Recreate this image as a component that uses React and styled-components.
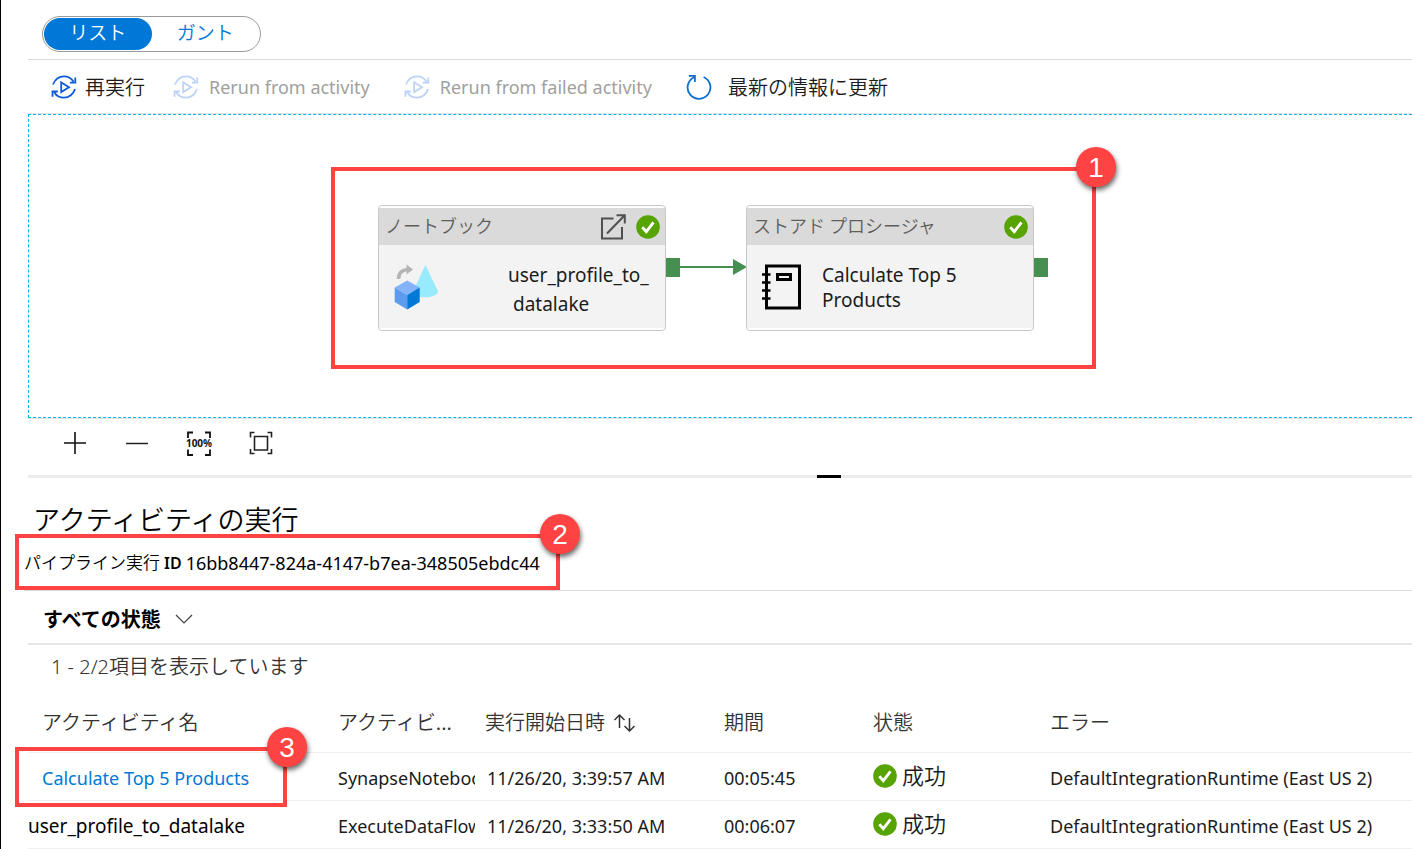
import React from "react";
import styled, { createGlobalStyle } from "styled-components";

const GlobalStyle = createGlobalStyle`
  * { box-sizing: border-box; }
  body {
    margin: 0;
    background: #fff;
    color: #1b1b1b;
    font-family: "Noto Sans", "Noto Sans CJK JP", sans-serif;
    font-size: 18px;
    line-height: 24px;
    overflow: hidden;
  }
  button, select { font: inherit; color: inherit; background: none; border: 0; padding: 0; margin: 0; }
  svg { display: block; flex: none; }
`;

const jp = '"Noto Sans CJK JP", sans-serif';

const Page = styled.main`
  min-height: 100vh;
  padding-left: 27px;
  border-left: 1px solid #000;
`;

const ViewBar = styled.header`
  padding: 16px 14px 7px;
  border-bottom: 1px solid #d9d9d9;
`;

const Toggle = styled.div`
  display: inline-flex;
  vertical-align: top;
  width: 219px;
  height: 36px;
  padding: 1px;
  border: 1px solid #9a9a9a;
  border-radius: 18px;
`;

const ToggleButton = styled.button`
  width: 108px;
  height: 32px;
  padding-bottom: 4px;
  border-radius: 16px;
  font: 350 19px/28px ${jp};
  background: ${(p) => (p.$active ? "#0078d7" : "transparent")};
  color: ${(p) => (p.$active ? "#fff" : "#0078d7")};
`;

const Toolbar = styled.div`
  display: flex;
  align-items: center;
  gap: 28px;
  height: 53px;
  padding-left: 23px;
`;

const ToolButton = styled.button`
  display: flex;
  align-items: center;
  gap: ${(p) => p.$gap || 8}px;
  height: 32px;
  margin-right: ${(p) => p.$after || 0}px;
  font: ${(p) => (p.$jp ? `350 20px/28px ${jp}` : "inherit")};
  color: ${(p) => (p.disabled ? "#a19f9d" : "#1b1b1b")};
  white-space: nowrap;
`;

const CanvasFrame = styled.section`
  border-top: 1px solid #e3e3e3;
  border-bottom: 1px solid #e3e3e3;
`;

const Canvas = styled.div`
  position: relative;
  height: 304px;
  border: 1px dashed #00b4ef;
  border-right: 0;
`;

const Node = styled.article`
  position: absolute;
  left: ${(p) => p.$x}px;
  top: 90px;
  width: 288px;
  height: 126px;
  padding: 2px 0;
  border: 1px solid #c8c8c8;
  border-radius: 4px;
  background: #fff;
`;

const NodeHead = styled.header`
  display: flex;
  align-items: center;
  gap: 10px;
  height: 37px;
  padding: 0 5px 0 6px;
  background: #dadada;
  color: #605e5c;
  font: 350 18px/28px ${jp};
`;

const NodeTitle = styled.span`
  flex: 1;
  padding-bottom: 3px;
  white-space: nowrap;
`;

const NodeBody = styled.div`
  display: flex;
  align-items: center;
  height: 83px;
  padding-left: 15px;
  background: #f3f3f3;
`;

const NodeLabel = styled.div`
  margin-left: ${(p) => p.$gap}px;
  width: 150px;
  padding-top: ${(p) => p.$drop || 2}px;
  font-size: 19px;
  line-height: ${(p) => p.$line || 25}px;
`;

const LabelLine = styled.div`
  padding-left: ${(p) => p.$indent || 0}px;
`;

const Port = styled.div`
  position: absolute;
  left: ${(p) => p.$x}px;
  top: 143px;
  width: 14px;
  height: 19px;
  background: #458f51;
`;

const Arrow = styled.svg`
  position: absolute;
  left: 651px;
  top: 143px;
`;

const Callout = styled.div`
  position: absolute;
  z-index: 2;
  left: ${(p) => p.$x}px;
  top: ${(p) => p.$y}px;
  width: ${(p) => p.$w}px;
  height: ${(p) => p.$h}px;
  border: 4px solid #ff4343;
  pointer-events: none;
`;

const Badge = styled.span`
  position: absolute;
  top: -24px;
  right: -24px;
  width: 40px;
  height: 40px;
  border-radius: 50%;
  background: #ff4343;
  box-shadow: 1px 3px 5px rgba(0, 0, 0, 0.6);
  color: #fff;
  font: 28px/41px "Liberation Sans", sans-serif;
  text-align: center;
`;

const ZoomBar = styled.div`
  display: flex;
  height: 56px;
  padding: 8px 0 0 16px;
`;

const ZoomButton = styled.button`
  display: flex;
  align-items: center;
  justify-content: center;
  width: 62px;
  height: 32px;
`;

const Splitter = styled.div`
  height: 3px;
  background: #ececec;
`;

const SplitterHandle = styled.div`
  width: 24px;
  height: 3px;
  margin-left: 57%;
  background: #000;
`;

const Heading = styled.h2`
  margin: 0;
  padding: 26px 0 1px 5px;
  font: 350 27px/30px ${jp};
  color: #000;
`;

const RunId = styled.div`
  position: relative;
  display: flex;
  align-items: center;
  gap: 4px;
  height: 56px;
  margin-left: -4px;
  border-bottom: 1px solid #dcdcdc;
  color: #000;
`;

const RunIdLabel = styled.span`
  padding-bottom: 1px;
  font: 350 17px/24px ${jp};
`;

const RunIdMark = styled.span`
  font-weight: 600;
  font-size: 16px;
`;

const Filter = styled.div`
  display: flex;
  align-items: center;
  height: 54px;
  padding: 4px 0 0 15px;
  border-bottom: 2px solid #e6e6e6;
`;

const StateSelect = styled.select`
  appearance: none;
  width: 132px;
  font: 700 20px/32px ${jp};
  color: #000;
`;

const Count = styled.p`
  margin: 0;
  padding: 6px 0 10px 23px;
  font-size: 20px;
  font-weight: 350;
  line-height: 31px;
  color: #333;
`;

const Table = styled.table`
  width: 100%;
  table-layout: fixed;
  border-collapse: separate;
  border-spacing: 0;
`;

const HeadCell = styled.th`
  height: 61px;
  padding: 0 0 0 ${(p) => p.$pad || 0}px;
  border-bottom: 1px solid #f0f0f0;
  font: 350 20px/30px ${jp};
  color: #333;
  text-align: left;
  white-space: nowrap;
`;

const HeadLabel = styled.span`
  display: flex;
  align-items: center;
  gap: 8px;
`;

const Cell = styled.td`
  position: ${(p) => (p.$anchor ? "relative" : "static")};
  height: 48px;
  padding: ${(p) => (p.$status ? 0 : 2)}px 0 0 ${(p) => p.$pad || 0}px;
  border-bottom: 1px solid #f0f0f0;
  overflow: ${(p) => (p.$clip ? "hidden" : "visible")};
  white-space: nowrap;
`;

const ActivityLink = styled.a`
  color: #0078d4;
  text-decoration: none;
`;

const ActivityName = styled.span`
  color: #000;
  font-size: 19px;
`;

const Status = styled.span`
  display: flex;
  align-items: center;
  gap: 5px;
  height: 44px;
  padding-bottom: 2px;
`;

const StatusText = styled.span`
  padding-bottom: 3px;
  font: 350 22px/30px ${jp};
`;

const RerunIcon = ({ faded }) => (
  <svg width="26" height="24" viewBox="0 0 26 24" fill="none" stroke={faded ? "#bcd3f7" : "#0b5cdb"} strokeWidth="1.800">
    <path d="M2 9.500C4 4.300 8 1.300 13 1.300c4 0 7.500 2 9.500 5.200M24.300 2.500v5.200h-5.400" />
    <path d="M24 14c-1.500 5-6 8.700-11 8.700-4 0-7.500-2-9.600-5.300M1.500 21.800v-5.300h5.400" />
    <path d="M10.200 7.300v9.800l7.800-4.900z" />
  </svg>
);

const RefreshIcon = () => (
  <svg width="26" height="26" viewBox="0 0 26 26" fill="none" stroke="#0f6fce" strokeWidth="1.800">
    <path d="M8 3.200A11.400 11.400 0 1 0 17.600 3M2.800 1.800h6.100v6.300" />
  </svg>
);

const CheckIcon = () => (
  <svg width="24" height="24" viewBox="0 0 24 24" fill="none">
    <circle cx="12" cy="12" r="11.800" fill="#57a300" />
    <path d="M6.300 12.300l4 4.400 7.200-9.400" stroke="#fff" strokeWidth="2.800" />
  </svg>
);

const OpenIcon = () => (
  <svg width="26" height="26" viewBox="0 0 26 26" fill="none" stroke="#505050" strokeWidth="2">
    <path d="M13.500 4.500H2v20h20V13M7 19.500L24.500 1.500M16.500 1.200h8.300v8.300" />
  </svg>
);

const DataFlowIcon = () => (
  <svg width="45" height="46" viewBox="0 0 45 46">
    <path d="M31.500 1L18.800 28c0 3 5.600 5.300 12.600 5.300S44 30.500 44 27.500z" fill="#98eafd" />
    <path d="M4.500 15C4.500 8 9 5.500 14.500 5.500" fill="none" stroke="#b5b5b5" strokeWidth="3.600" />
    <path d="M12.500.5l6.500 5-6.500 5z" fill="#b5b5b5" />
    <path d="M13.200 16.500L25.700 23.500 13.200 31 .7 23.500z" fill="#83b3f8" />
    <path d="M.7 23.500l12.500 7.500v14.500L.7 38z" fill="#5c9bee" />
    <path d="M25.700 23.500L13.200 31v14.500L25.700 38z" fill="#0078d7" />
  </svg>
);

const NotebookIcon = () => (
  <svg width="40" height="46" viewBox="0 0 40 46" fill="none" stroke="#000" strokeWidth="3">
    <path d="M4.500 2h33v42h-33zM15.500 10.500h13v5h-13z" />
    <path d="M0 10.500h8.500M0 18.500h8.500M0 26.500h8.500M0 34.500h8.500" strokeWidth="2.600" />
  </svg>
);

const PlusIcon = () => (
  <svg width="22" height="22" viewBox="0 0 22 22" stroke="#111" strokeWidth="1.600">
    <path d="M11 0v22M0 11h22" />
  </svg>
);

const MinusIcon = () => (
  <svg width="22" height="22" viewBox="0 0 22 22" stroke="#222" strokeWidth="1.500">
    <path d="M0 11.500h22" />
  </svg>
);

const ActualSizeIcon = () => (
  <svg width="26" height="26" viewBox="0 0 26 26" fill="none" stroke="#111" strokeWidth="1.800">
    <path d="M2 8V2.500h5M19 2.500h5V8M2 19.500V25h5M19 25h5v-5.500" />
    <text x="13" y="17" textAnchor="middle" fill="#111" stroke="none" fontSize="10" fontWeight="700">100%</text>
  </svg>
);

const FitIcon = () => (
  <svg width="24" height="24" viewBox="0 0 24 24" fill="none" stroke="#222" strokeWidth="1.600">
    <path d="M1.500 6.500v-5h4M18.500 1.500h4v5M1.500 18v4.500h4M18.500 22.500h4V18M5.500 5.500h13v13.500h-13z" />
  </svg>
);

const ChevronIcon = () => (
  <svg width="18" height="10" viewBox="0 0 18 10" fill="none" stroke="#444" strokeWidth="1.200">
    <path d="M1 1l8 8 8-8" />
  </svg>
);

const SortIcon = () => (
  <svg width="24" height="20" viewBox="0 0 24 20" fill="none" stroke="#333" strokeWidth="1.500">
    <path d="M6.500 16V3M1.500 8l5-5 5 5M16.500 6v13M11.500 14l5 5 5-5" />
  </svg>
);

const runs = [
  { name: "Calculate Top 5 Products", link: true, type: "SynapseNotebook", start: "11/26/20, 3:39:57 AM", duration: "00:05:45" },
  { name: "user_profile_to_datalake", link: false, type: "ExecuteDataFlow", start: "11/26/20, 3:33:50 AM", duration: "00:06:07" },
];

export default function App() {
  return (
    <Page>
      <GlobalStyle />
      <ViewBar>
        <Toggle>
          <ToggleButton type="button" $active aria-pressed="true">リスト</ToggleButton>
          <ToggleButton type="button" aria-pressed="false">ガント</ToggleButton>
        </Toggle>
      </ViewBar>

      <Toolbar>
        <ToolButton type="button" $jp><RerunIcon />再実行</ToolButton>
        <ToolButton type="button" disabled $gap={10} $after={6}><RerunIcon faded />Rerun from activity</ToolButton>
        <ToolButton type="button" disabled $gap={10} $after={6}><RerunIcon faded />Rerun from failed activity</ToolButton>
        <ToolButton type="button" $jp $gap={16}><RefreshIcon />最新の情報に更新</ToolButton>
      </Toolbar>

      <CanvasFrame>
        <Canvas>
          <Node $x={349}>
            <NodeHead>
              <NodeTitle>ノートブック</NodeTitle>
              <OpenIcon />
              <CheckIcon />
            </NodeHead>
            <NodeBody>
              <DataFlowIcon />
              <NodeLabel $gap={69} $line={29} $drop={6}>
                <LabelLine>user_profile_to_</LabelLine>
                <LabelLine $indent={5}>datalake</LabelLine>
              </NodeLabel>
            </NodeBody>
          </Node>
          <Port $x={637} />
          <Arrow width="67" height="18" viewBox="0 0 67 18">
            <path d="M0 9h54" stroke="#458f51" strokeWidth="2" />
            <path d="M53 1l14 8-14 8z" fill="#458f51" />
          </Arrow>
          <Node $x={717}>
            <NodeHead>
              <NodeTitle>ストアド プロシージャ</NodeTitle>
              <CheckIcon />
            </NodeHead>
            <NodeBody>
              <NotebookIcon />
              <NodeLabel $gap={20}>Calculate Top 5 Products</NodeLabel>
            </NodeBody>
          </Node>
          <Port $x={1005} />
          <Callout $x={302} $y={52} $w={765} $h={202}><Badge>1</Badge></Callout>
        </Canvas>
      </CanvasFrame>

      <ZoomBar>
        <ZoomButton type="button" aria-label="+"><PlusIcon /></ZoomButton>
        <ZoomButton type="button" aria-label="-"><MinusIcon /></ZoomButton>
        <ZoomButton type="button" aria-label="100%"><ActualSizeIcon /></ZoomButton>
        <ZoomButton type="button" aria-label="□"><FitIcon /></ZoomButton>
      </ZoomBar>
      <Splitter><SplitterHandle /></Splitter>

      <Heading>アクティビティの実行</Heading>
      <RunId>
        <RunIdLabel>パイプライン実行</RunIdLabel>
        <RunIdMark>ID</RunIdMark>
        <span>16bb8447-824a-4147-b7ea-348505ebdc44</span>
        <Callout $x={-9} $y={-1} $w={545} $h={56}><Badge>2</Badge></Callout>
      </RunId>

      <Filter>
        <StateSelect aria-label="状態" defaultValue="all">
          <option value="all">すべての状態</option>
        </StateSelect>
        <ChevronIcon />
      </Filter>

      <Count>1 - 2/2項目を表示しています</Count>

      <Table>
        <colgroup>
          <col style={{ width: 310 }} />
          <col style={{ width: 137 }} />
          <col style={{ width: 249 }} />
          <col style={{ width: 149 }} />
          <col style={{ width: 177 }} />
          <col />
        </colgroup>
        <thead>
          <tr>
            <HeadCell $pad={14}>アクティビティ名</HeadCell>
            <HeadCell>アクティビ...</HeadCell>
            <HeadCell $pad={10}><HeadLabel>実行開始日時<SortIcon /></HeadLabel></HeadCell>
            <HeadCell>期間</HeadCell>
            <HeadCell>状態</HeadCell>
            <HeadCell>エラー</HeadCell>
          </tr>
        </thead>
        <tbody>
          {runs.map((run) => (
            <tr key={run.name}>
              <Cell $pad={run.link ? 14 : 0} $anchor={run.link}>
                {run.link ? <ActivityLink href="#activity">{run.name}</ActivityLink> : <ActivityName>{run.name}</ActivityName>}
                {run.link && <Callout $x={-13} $y={-6} $w={272} $h={60}><Badge>3</Badge></Callout>}
              </Cell>
              <Cell $clip>{run.type}</Cell>
              <Cell $pad={12}>{run.start}</Cell>
              <Cell>{run.duration}</Cell>
              <Cell $status><Status><CheckIcon /><StatusText>成功</StatusText></Status></Cell>
              <Cell>DefaultIntegrationRuntime (East US 2)</Cell>
            </tr>
          ))}
        </tbody>
      </Table>
    </Page>
  );
}
